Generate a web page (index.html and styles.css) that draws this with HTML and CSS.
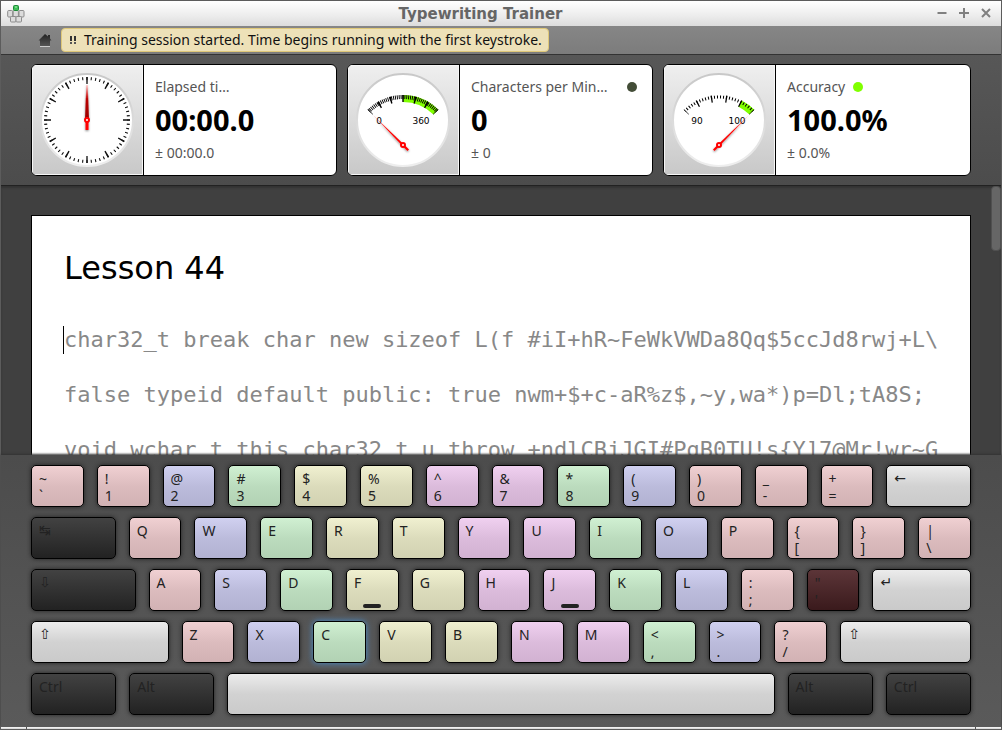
FILE: index.html
```html
<!DOCTYPE html>
<html lang="en">
<head>
<meta charset="utf-8">
<title>Typewriting Trainer</title>
<link rel="stylesheet" href="styles.css">
</head>
<body>
<div class="window">
  <header class="titlebar">
    <svg class="app-icon" width="18" height="18" viewBox="0 0 18 18" aria-hidden="true">
      <g fill="#dcdcdc" stroke="#8c8c8c">
        <rect x=".7" y="5.500" width="5" height="6.500" rx="1"/><rect x="6.200" y="5.500" width="5.200" height="6.500" rx="1"/><rect x="12" y="5.500" width="5" height="6.500" rx="1"/>
        <rect x="3.500" y="11.500" width="5.500" height="5.500" rx="1"/><rect x="9" y="11.500" width="5.500" height="5.500" rx="1"/>
      </g>
      <rect x="6.500" y=".5" width="5" height="5" rx="1" fill="#3fbf58" stroke="#1c8a37"/>
      <path d="M8 2h2" stroke="#a8f0b4"/>
    </svg>
    <h1 class="window-title">Typewriting Trainer</h1>
    <div class="window-buttons">
      <button type="button" aria-label="Minimize"><svg width="12" height="12" viewBox="0 0 12 12"><path d="M1.500 5h9"/></svg></button>
      <button type="button" aria-label="Maximize"><svg width="12" height="12" viewBox="0 0 12 12"><path d="M1 5h10M6 0v10"/></svg></button>
      <button type="button" aria-label="Close"><svg width="12" height="12" viewBox="0 0 12 12"><path d="M2 1l8 8M10 1l-8 8"/></svg></button>
    </div>
  </header>

  <nav class="toolbar">
    <button class="home" type="button" aria-label="Home">
      <svg width="14" height="15" viewBox="0 0 14 15">
        <defs><linearGradient id="house" x2="0" y2="1"><stop offset="0" stop-color="#222"/><stop offset="1" stop-color="#555"/></linearGradient></defs>
        <path d="M2 13.500h10" stroke="#ccc"/>
        <path d="M7 1l3 2.500V2h2v3.500L13.500 7.500H12V13H2V7.500H.5z" fill="url(#house)"/>
      </svg>
    </button>
    <div class="notice" role="status">
      <svg width="8" height="10" viewBox="0 0 8 10" aria-hidden="true"><path d="M2 1v5M6 1v5" stroke="#333" stroke-width="2"/><path d="M2 7v2M6 7v2" stroke="#555" stroke-width="2"/></svg>
      <span>Training session started. Time begins running with the first keystroke.</span>
    </div>
  </nav>

  <section class="stats">
    <article class="card">
      <div class="gauge">
        <svg width="110" height="110" viewBox="0 0 110 110" aria-hidden="true">
          <defs>
            <linearGradient id="rim" x2="0" y2="1"><stop offset="0" stop-color="#c8c8c8"/><stop offset="1" stop-color="#eee"/></linearGradient>
            <linearGradient id="hand" x2="0" y2="1"><stop offset="0" stop-color="#f66" stop-opacity=".4"/><stop offset=".4" stop-color="#b00"/><stop offset="1" stop-color="#900"/></linearGradient>
            <linearGradient id="needleLeft" gradientUnits="userSpaceOnUse" x1="25" y1="50" x2="55" y2="80"><stop offset="0" stop-color="red" stop-opacity=".4"/><stop offset=".5" stop-color="red"/></linearGradient>
            <linearGradient id="needleRight" gradientUnits="userSpaceOnUse" x1="85" y1="50" x2="55" y2="80"><stop offset="0" stop-color="red" stop-opacity=".4"/><stop offset=".5" stop-color="red"/></linearGradient>
            <filter id="shade" x="-1" y="-1" width="3" height="3"><feDropShadow dx="0" dy="1" stdDeviation="1" flood-opacity=".5"/></filter>
          </defs>
          <circle cx="55" cy="55" r="46" fill="#fff" stroke="url(#rim)" stroke-width="2"/>
          <g fill="none" stroke="#111">
            <circle cx="55" cy="55" r="41.500" stroke-width="3" pathLength="240" stroke-dasharray="1 3" stroke-dashoffset=".5"/>
            <circle cx="55" cy="55" r="39.500" stroke-width="7" pathLength="240" stroke-dasharray="1.400 18.600" stroke-dashoffset=".7"/>
          </g>
          <g filter="url(#shade)"><path d="M54.300 20h1.400L57 55h-4z" fill="url(#hand)"/><path d="M55 56v9" stroke="red" stroke-width="3"/></g>
          <circle cx="55" cy="55" r="2" fill="#fff" stroke="red" stroke-width="2"/>
        </svg>
      </div>
      <div class="reading"><h2>Elapsed ti…</h2><strong>00:00.0</strong><span>± 00:00.0</span></div>
    </article>

    <article class="card">
      <div class="gauge">
        <svg width="110" height="110" viewBox="0 0 110 110" aria-hidden="true">
          <circle cx="55" cy="55" r="46" fill="#fff" stroke="url(#rim)" stroke-width="2"/>
          <path d="M55 33.500A46.500 46.500 0 0 1 87.880 47.120" fill="none" stroke="#80ff00" stroke-width="7"/>
          <g fill="none" stroke="#000">
            <path d="M21.060 46.060A48 48 0 0 1 88.940 46.060" stroke-width="4" pathLength="400" stroke-dasharray="5 5" stroke-dashoffset="2.500"/>
            <path d="M22.120 47.120A46.500 46.500 0 0 1 87.880 47.120" stroke-width="7" pathLength="600" stroke-dasharray="12 88" stroke-dashoffset="6"/>
          </g>
          <text class="scale" x="31" y="59">0</text><text class="scale" x="73" y="59">360</text>
          <g filter="url(#shade)"><path d="M25 50L55.700 79.300 61 84.500 59.500 86 54.300 80.700z" fill="url(#needleLeft)"/></g>
          <circle cx="55" cy="80" r="2" fill="#fff" stroke="red" stroke-width="2"/>
        </svg>
      </div>
      <div class="reading"><h2>Characters per Min…<i class="lamp lamp-off"></i></h2><strong>0</strong><span>± 0</span></div>
    </article>

    <article class="card">
      <div class="gauge">
        <svg width="110" height="110" viewBox="0 0 110 110" aria-hidden="true">
          <circle cx="55" cy="55" r="46" fill="#fff" stroke="url(#rim)" stroke-width="2"/>
          <path d="M76.110 38.570A46.500 46.500 0 0 1 87.880 47.120" fill="none" stroke="#80ff00" stroke-width="7"/>
          <g fill="none" stroke="#000">
            <path d="M21.060 46.060A48 48 0 0 1 88.940 46.060" stroke-width="3" pathLength="250" stroke-dasharray="3.400 6.600" stroke-dashoffset="1.700"/>
            <path d="M22.120 47.120A46.500 46.500 0 0 1 87.880 47.120" stroke-width="7" pathLength="500" stroke-dasharray="9 91" stroke-dashoffset="4.500"/>
          </g>
          <text class="scale" x="33" y="59">90</text><text class="scale" x="73" y="59">100</text>
          <g filter="url(#shade)"><path d="M85 50L54.300 79.300 49 84.500 50.500 86 55.700 80.700z" fill="url(#needleRight)"/></g>
          <circle cx="55" cy="80" r="2" fill="#fff" stroke="red" stroke-width="2"/>
        </svg>
      </div>
      <div class="reading"><h2>Accuracy<i class="lamp lamp-on"></i></h2><strong>100.0%</strong><span>± 0.0%</span></div>
    </article>
  </section>

  <main class="lesson">
    <div class="sheet">
      <h2>Lesson 44</h2>
      <p><span class="caret"></span>char32_t break char new sizeof L(f #iI+hR~FeWkVWDa8Qq$5ccJd8rwj+L\</p>
      <p>false typeid default public: true nwm+$+c-aR%z$,~y,wa*)p=Dl;tA8S;</p>
      <p>void wchar_t this char32_t u throw +ndlCBjJGI#PgB0TU!s{Y]7@Mr!wr~G</p>
    </div>
    <div class="scroll-thumb"></div>
  </main>

  <section class="keyboard" aria-label="Keyboard">
    <div class="row">
      <button class="key red"><span>~<br>`</span></button>
      <button class="key red"><span>!<br>1</span></button>
      <button class="key blue"><span>@<br>2</span></button>
      <button class="key green"><span>#<br>3</span></button>
      <button class="key yellow"><span>$<br>4</span></button>
      <button class="key yellow"><span>%<br>5</span></button>
      <button class="key violet"><span>^<br>6</span></button>
      <button class="key violet"><span>&amp;<br>7</span></button>
      <button class="key green"><span>*<br>8</span></button>
      <button class="key blue"><span>(<br>9</span></button>
      <button class="key red"><span>)<br>0</span></button>
      <button class="key red"><span>_<br>-</span></button>
      <button class="key red"><span>+<br>=</span></button>
      <button class="key wide symbol"><span>←</span></button>
    </div>
    <div class="row">
      <button class="key wide dark symbol"><span>↹</span></button>
      <button class="key red"><span>Q</span></button>
      <button class="key blue"><span>W</span></button>
      <button class="key green"><span>E</span></button>
      <button class="key yellow"><span>R</span></button>
      <button class="key yellow"><span>T</span></button>
      <button class="key violet"><span>Y</span></button>
      <button class="key violet"><span>U</span></button>
      <button class="key green"><span>I</span></button>
      <button class="key blue"><span>O</span></button>
      <button class="key red"><span>P</span></button>
      <button class="key red"><span>{<br>[</span></button>
      <button class="key red"><span>}<br>]</span></button>
      <button class="key red"><span>|<br>\</span></button>
    </div>
    <div class="row">
      <button class="key caps dark symbol"><span>⇩</span></button>
      <button class="key red"><span>A</span></button>
      <button class="key blue"><span>S</span></button>
      <button class="key green"><span>D</span></button>
      <button class="key yellow home-key"><span>F</span></button>
      <button class="key yellow"><span>G</span></button>
      <button class="key violet"><span>H</span></button>
      <button class="key violet home-key"><span>J</span></button>
      <button class="key green"><span>K</span></button>
      <button class="key blue"><span>L</span></button>
      <button class="key red"><span>:<br>;</span></button>
      <button class="key maroon"><span>"<br>'</span></button>
      <button class="key enter symbol"><span>↵</span></button>
    </div>
    <div class="row">
      <button class="key shift-left symbol"><span>⇧</span></button>
      <button class="key red"><span>Z</span></button>
      <button class="key blue"><span>X</span></button>
      <button class="key green next"><span>C</span></button>
      <button class="key yellow"><span>V</span></button>
      <button class="key yellow"><span>B</span></button>
      <button class="key violet"><span>N</span></button>
      <button class="key violet"><span>M</span></button>
      <button class="key green"><span>&lt;<br>,</span></button>
      <button class="key blue"><span>&gt;<br>.</span></button>
      <button class="key red"><span>?<br>/</span></button>
      <button class="key shift-right symbol"><span>⇧</span></button>
    </div>
    <div class="row">
      <button class="key wide dark"><span>Ctrl</span></button>
      <button class="key wide dark"><span>Alt</span></button>
      <button class="key space" aria-label="Space"></button>
      <button class="key wide dark"><span>Alt</span></button>
      <button class="key wide dark"><span>Ctrl</span></button>
    </div>
  </section>
  <footer class="frame-bottom"><span></span><span></span><span></span></footer>
</div>
</body>
</html>
```
FILE: styles.css
```css
* { box-sizing: border-box; }

body {
  margin: 0;
  font-family: "Noto Sans", "Open Sans", sans-serif;
  font-size: 14px;
}

h1, h2, p { margin: 0; font-weight: normal; }
button { font: inherit; border: 0; padding: 0; background: none; }
svg { display: block; }

.window {
  height: 100vh;
  display: flex;
  flex-direction: column;
  border: 1px solid #5c5c5c;
  background: #555;
}

/* Title bar */
.titlebar {
  height: 25px;
  flex: none;
  display: grid;
  grid-template-columns: auto 1fr auto;
  align-items: center;
  padding: 0 9px 0 6px;
  background: linear-gradient(#fff, #ececec 60%, #dcdcdc);
}
.window-title {
  font: bold 15px/20px "DejaVu Sans", sans-serif;
  text-align: center;
  color: #666;
}
.window-buttons { display: flex; justify-content: flex-end; gap: 10px; }
.window-buttons svg { stroke: #808080; stroke-width: 2; fill: none; }

/* Toolbar */
.toolbar {
  height: 29px;
  flex: none;
  display: flex;
  align-items: center;
  gap: 9px;
  padding: 0 37px;
  background: linear-gradient(#868686, #7c7c7c);
  border-bottom: 1px solid #333;
}
.notice {
  display: flex;
  align-items: center;
  gap: 7px;
  height: 24px;
  padding: 0 6px 0 7px;
  border: 1px solid #dfc878;
  border-radius: 4px;
  background: #ede1b8;
  line-height: 20px;
  color: #111;
  white-space: nowrap;
}

/* Statistics */
.stats {
  flex: none;
  display: grid;
  grid-template-columns: 306fr 306fr 308fr;
  gap: 10px;
  padding: 9px 30px;
  background: linear-gradient(#575757, #4c4c4c);
  border-bottom: 1px solid #222;
}
.card {
  display: flex;
  overflow: hidden;
  border: 1px solid #000;
  border-radius: 6px;
  background: #fff;
}
.gauge {
  flex: none;
  border-right: 1px solid #000;
  padding-right: 1px;
  background: linear-gradient(#efefef, #c8c8c8);
  box-shadow: inset 0 0 0 1px #f6f6f6;
}
.scale {
  font: 9px "DejaVu Sans", sans-serif;
  text-anchor: middle;
}
.reading {
  min-width: 0;
  display: flex;
  flex-direction: column;
  padding: 11px;
  color: #555;
}
.reading h2 {
  display: flex;
  align-items: center;
  gap: 8px;
  font-size: 14px;
  line-height: 22px;
  white-space: nowrap;
}
.reading strong {
  font-size: 29px;
  line-height: 44px;
  color: #000;
}
.reading span { line-height: 22px; }
.lamp { width: 10px; height: 10px; border-radius: 50%; }
.lamp-on { background: #80ff00; }
.lamp-off { background: #434d37; margin-left: 12px; }

/* Lesson text */
.lesson {
  position: relative;
  flex: 1;
  min-height: 0;
  overflow: hidden;
  padding: 29px 30px 0;
  background: #404040;
  box-shadow: inset 0 2px 2px #333;
}
.sheet {
  min-height: 100%;
  padding: 32px 32px 40px;
  border: 1px solid #000;
  background: #fff;
}
.sheet h2 {
  margin-bottom: 24px;
  font: 32px/40px "DejaVu Sans", sans-serif;
}
.sheet p {
  position: relative;
  font: 22px/55px "DejaVu Sans Mono", monospace;
  color: #888;
  white-space: nowrap;
}
.caret {
  position: absolute;
  left: -1px;
  top: 14px;
  width: 1px;
  height: 28px;
  background: #000;
}
.scroll-thumb {
  position: absolute;
  top: 0;
  right: 0;
  width: 10px;
  height: 65px;
  border: 1px solid #505050;
  border-radius: 4px;
  background: #666;
}

/* Keyboard */
.keyboard {
  position: relative;
  flex: none;
  display: flex;
  flex-direction: column;
  gap: 10px;
  padding: 10px 30px 12px;
  background: linear-gradient(#4c4c4c, #5a5a5a);
  box-shadow: 0 -1px 2px #333;
}
.row { display: flex; gap: 13px; }
.key {
  --units: 53;
  position: relative;
  flex: var(--units) 1 calc(var(--units) * 1px);
  min-width: 0;
  height: 42px;
  padding: 4px 7px 0;
  border: 1px solid #000;
  border-radius: 5px;
  background: linear-gradient(#ececec, #d2d2d2 50%, #cacaca);
  box-shadow: 0 0 4px #222;
  text-align: left;
  font-size: 14px;
  line-height: 17px;
  color: #222;
  white-space: nowrap;
}
.key > span { display: block; height: 36px; }
.symbol { font-family: "DejaVu Sans", sans-serif; }
.wide { --units: 85; }
.caps { --units: 105; }
.enter { --units: 99; }
.shift-left { --units: 138; }
.shift-right { --units: 131; }
.space { --units: 546; }
.red { background: linear-gradient(#f0d0d2, #dcbcbe 50%, #d2b2b4); }
.blue { background: linear-gradient(#d0d0f0, #bcbcdc 50%, #b2b2d2); }
.green { background: linear-gradient(#d0f0d2, #bcdcbe 50%, #b2d2b4); }
.yellow { background: linear-gradient(#f0f0d0, #dcdcbc 50%, #d2d2b2); }
.violet { background: linear-gradient(#f0d0f0, #dcbcdc 50%, #d2b2d2); }
.dark { background: linear-gradient(#424242, #222); }
.maroon { background: linear-gradient(#5c3538, #3a1a1c); }
.next { box-shadow: 0 0 6px #4a90d0; }
.home-key::after {
  content: "";
  position: absolute;
  left: 50%;
  bottom: 2px;
  width: 18px;
  height: 4px;
  margin-left: -9px;
  border-radius: 2px;
  background: #222;
}

/* Window frame */
.frame-bottom {
  flex: none;
  display: grid;
  grid-template-columns: 25px 1fr 25px;
  gap: 1px;
}
.frame-bottom span { height: 2px; background: #ddd; border-top: 1px solid #fff; }
```
